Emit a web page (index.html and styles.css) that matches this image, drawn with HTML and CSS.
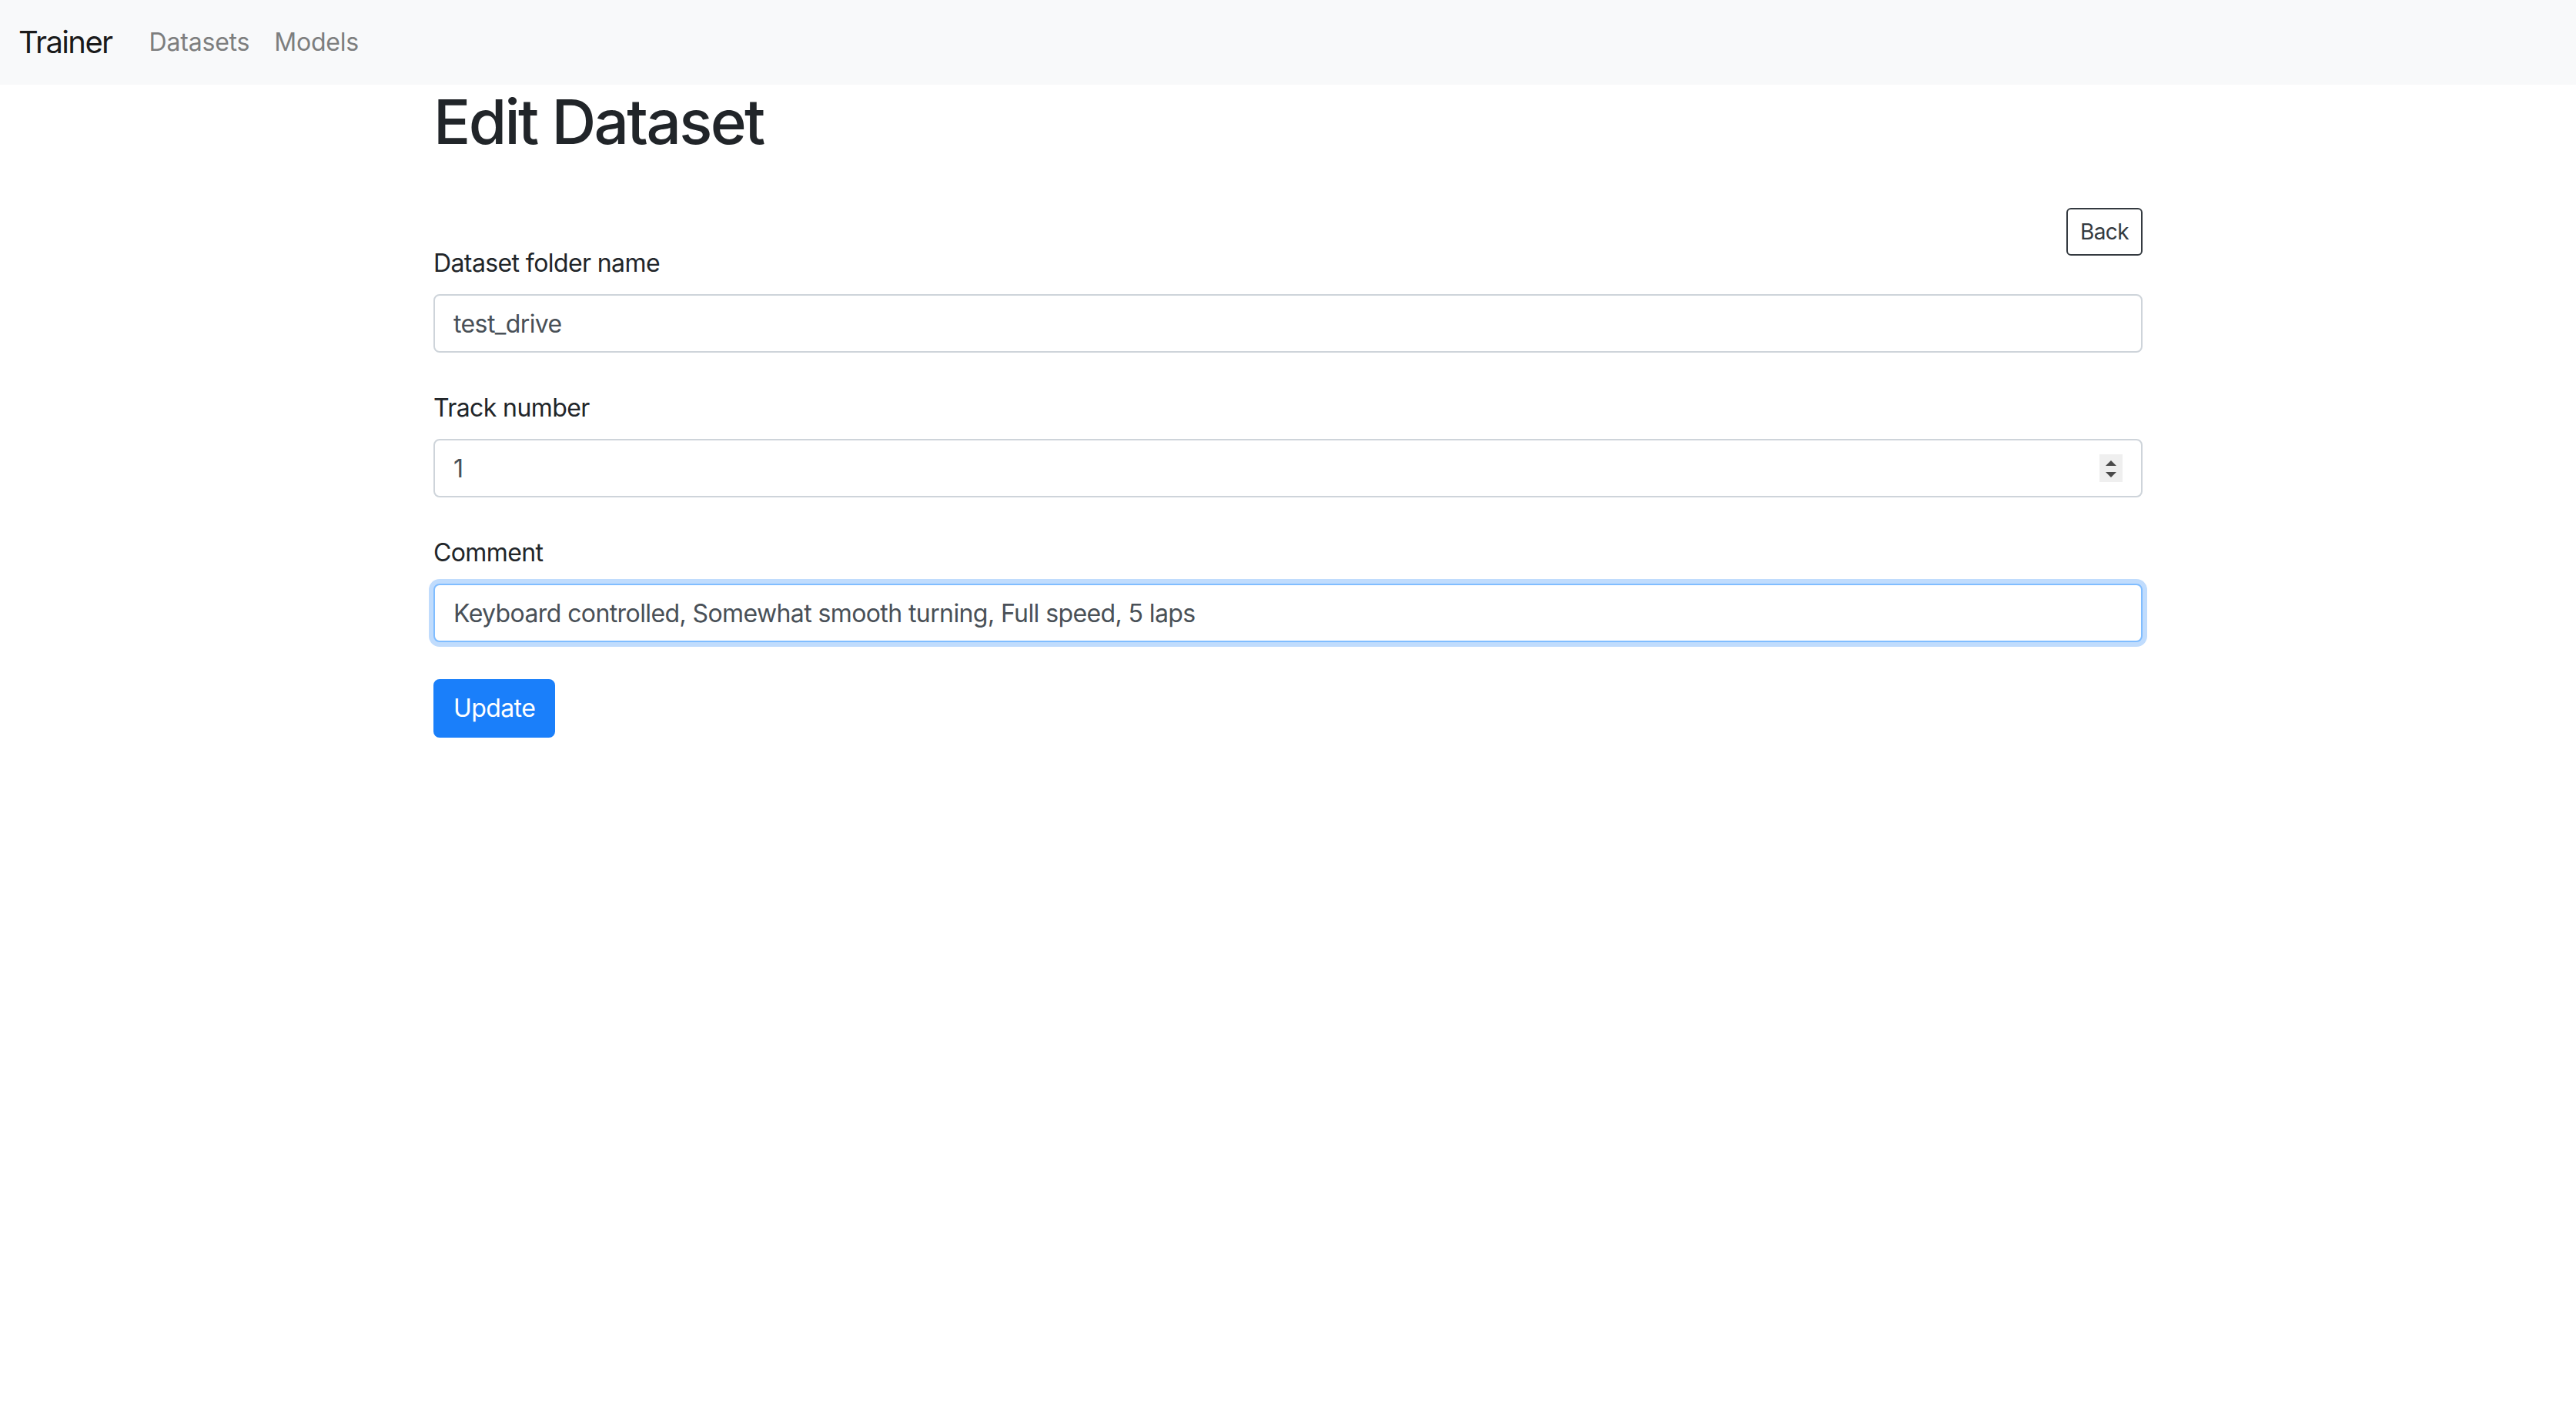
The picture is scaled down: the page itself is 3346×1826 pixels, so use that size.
FILE: index.html
```html
<!DOCTYPE html>
<html lang="en">
<head>
<meta charset="utf-8">
<title>Trainer - Edit Dataset</title>
<link rel="stylesheet" href="styles.css">
</head>
<body>
<nav class="navbar">
  <a class="brand" href="#">Trainer</a>
  <ul class="nav">
    <li><a class="nav-link" href="#">Datasets</a></li>
    <li><a class="nav-link" href="#">Models</a></li>
  </ul>
</nav>
<main class="container">
  <h1 class="title">Edit Dataset</h1>
  <div class="toolbar">
    <a class="btn btn-outline" href="#">Back</a>
  </div>
  <form class="form">
    <div class="form-group">
      <label class="label" for="folder">Dataset folder name</label>
      <input class="input" id="folder" type="text" value="test_drive">
    </div>
    <div class="form-group">
      <label class="label" for="track">Track number</label>
      <div class="number-wrap">
        <input class="input" id="track" type="text" value="1">
        <span class="spinner" aria-hidden="true">
          <svg width="30" height="36" viewBox="0 0 30 36">
            <rect width="30" height="36" fill="#efefef"/>
            <polygon points="15,8 22,15 8,15" fill="#4a4a4a"/>
            <polygon points="8,23 22,23 15,30" fill="#4a4a4a"/>
          </svg>
        </span>
      </div>
    </div>
    <div class="form-group">
      <label class="label" for="comment">Comment</label>
      <input class="input input-focus" id="comment" type="text" value="Keyboard controlled, Somewhat smooth turning, Full speed, 5 laps">
    </div>
    <button class="btn btn-primary" type="button">Update</button>
  </form>
</main>
</body>
</html>
```

FILE: styles.css
```css
* { box-sizing: border-box; }

body {
  margin: 0;
  font-family: Inter, "Liberation Sans", sans-serif;
  font-size: 32px;
  line-height: 1.5;
  letter-spacing: -0.6px;
  color: #212529;
  background: #fff;
}

.navbar {
  display: flex;
  align-items: center;
  height: 110px;
  padding: 0 24px;
  background: #f8f9fa;
}

.brand {
  font-size: 40px;
  line-height: 60px;
  letter-spacing: -1.6px;
  color: #1a1a1a;
  text-decoration: none;
  margin-right: 32px;
}

.nav {
  display: flex;
  list-style: none;
  margin: 0;
  padding: 0;
}

.nav-link {
  display: block;
  padding: 0 16px;
  font-size: 32px;
  line-height: 48px;
  letter-spacing: -0.2px;
  color: #7d7e7e;
  text-decoration: none;
}

.container {
  max-width: 2220px;
  margin: 0 auto;
}

.title {
  margin: 0 0 16px;
  font-size: 80px;
  font-weight: 500;
  line-height: 1.2;
  letter-spacing: -2.6px;
}

.toolbar {
  display: flex;
  justify-content: flex-end;
  align-items: flex-start;
  height: 96px;
  padding-top: 48px;
}

.btn {
  display: inline-block;
  border: 2px solid transparent;
  text-decoration: none;
  font-family: inherit;
  letter-spacing: inherit;
  cursor: pointer;
}

.btn-outline {
  padding: 8px 16px;
  font-size: 28px;
  line-height: 42px;
  color: #343a40;
  border-color: #343a40;
  border-radius: 6px;
  background: #fff;
}

.btn-primary {
  padding: 12px 24px;
  font-size: 32px;
  line-height: 48px;
  color: #fff;
  background: #1a7ffa;
  border-color: #1a7ffa;
  border-radius: 8px;
}

.form-group {
  margin-bottom: 48px;
}

.label {
  display: block;
  margin-bottom: 16px;
  line-height: 48px;
}

.input {
  display: block;
  width: 100%;
  height: 76px;
  padding: 12px 24px;
  font-family: inherit;
  font-size: 32px;
  line-height: 48px;
  letter-spacing: inherit;
  color: #495057;
  background: #fff;
  border: 2px solid #ced4da;
  border-radius: 8px;
  outline: none;
}

.input-focus {
  border-color: #80bdff;
  box-shadow: 0 0 0 6px #c0dcfd;
}

.number-wrap {
  position: relative;
}

.spinner {
  position: absolute;
  right: 26px;
  top: 20px;
  width: 30px;
  height: 36px;
  display: block;
}

.spinner svg {
  display: block;
}
```
